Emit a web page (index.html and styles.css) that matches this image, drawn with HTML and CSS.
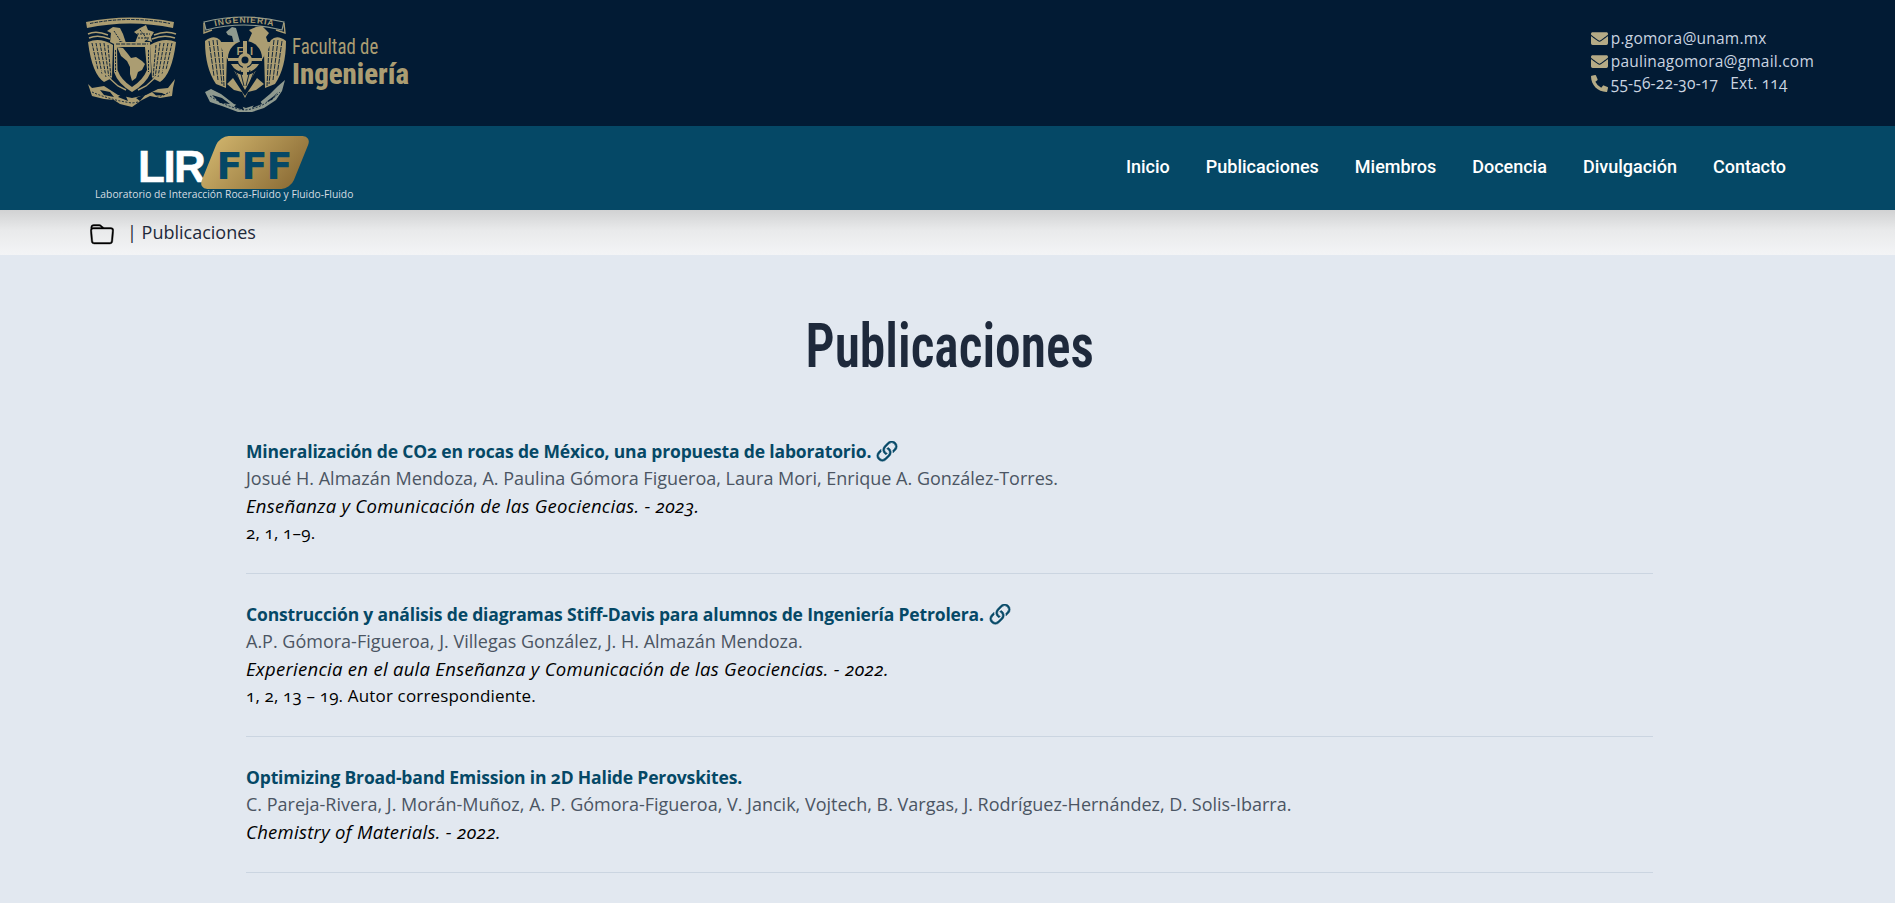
FILE: index.html
```html
<!DOCTYPE html>
<html lang="es">
<head>
<meta charset="utf-8">
<title>Publicaciones</title>
<link rel="stylesheet" href="styles.css">
</head>
<body>
<header class="top">
  <div class="brand">
    <svg class="crest-unam" viewBox="0 0 105 105" aria-hidden="true">
      <path class="g" d="M6 12Q50 3 94 12L93 18Q50 9 7 18Z"/>
      <path class="d-line" d="M10 13.500Q50 5.500 90 13.500" stroke-dasharray="3.500 1.100"/>
      <path class="g-s" d="M8 24Q16 20 28 25M96 24Q86 20 74 25M9 28Q18 24 30 29M95 28Q84 24 72 29"/>
      <path class="g" d="M30 32L31 23L27 21L33 17L40 18L43 24L46 33L40 31L36 35ZM55 33L58 25L54 22L60 18L66 15L68 20L74 22L71 27L72 32L66 30L62 35Z"/>
      <path class="d-line" d="M34 21L40 30M60 20L68 30M57 24L70 24M58 28L70 28" stroke-dasharray="2 1"/>
      <path class="g" d="M8 32Q20 27 33 35L32 68L24 72Q12 64 8 32ZM96 32Q84 27 70 35L72 68L80 72Q92 64 96 32Z"/>
      <path class="d-line" d="M12 33L18 60M16 33L22 64M20 33L26 67M24 33L29 68M28 35L31 68M92 33L86 60M88 33L82 64M84 33L78 67M80 33L75 68M76 35L73 68" stroke-dasharray="3.500 1.100"/>
      <path class="g" d="M34 32H70L71 62Q66 74 52 82Q38 74 34 62Z"/>
      <path class="navy" d="M37 37H65L67 60Q63 70 52 77Q41 70 37.500 60Z"/>
      <path class="d-line" d="M36 34H68" stroke-dasharray="4 1.200"/>
      <path class="d-line" d="M35.500 40V62M68.500 40V62" stroke-dasharray="2.500 1"/>
      <path class="g" d="M37 37L43 38L48 44L51 48L56 47L62 51L65 54L62 60L58 62L56 68L52 71L50 64L50 57L47 51L41 46Z"/>
      <path class="g-s" d="M27 66L38 76L46 80M77 66L66 76L58 80M20 60L30 68M84 60L74 68"/>
      <path class="g" d="M8 74L12 78L24 76L38 85L52 88L66 85L78 79L88 78L95 69L93 78L92 86L80 88L70 86L62 90L52 97L40 94L34 90L24 89L12 86Z"/>
      <path class="navy" d="M20 80L30 82L34 87L24 85ZM38 87L48 91L44 82ZM56 88L66 84L60 91ZM72 82L82 83L86 85L76 85.500Z"/>
      <path class="d-line" d="M12 82Q30 90 52 93Q74 90 90 82" stroke-dasharray="2 1.500"/>
    </svg>
    <svg class="crest-fi" viewBox="0 0 95 108" aria-hidden="true">
      <path class="g-o" d="M6 14Q46 4 86 14L84 22Q46 12 8 22Z"/>
      <path class="g-s" d="M6 15L6 25L14 22M86 15L87 25L78 22"/>
      <path id="fi-arc" class="none" d="M10 20Q46 9.500 83 20"/>
      <text class="crest-text"><textPath href="#fi-arc" startOffset="50%" text-anchor="middle">INGENIERIA</textPath></text>
      <path class="pale" d="M28 24L34 19L38 20L42 34L36 36L34 28L30 27Z"/>
      <path class="g" d="M50 34L54 25L51 22L58 19L64 18L68 22L71 25L68 29L70 35Z"/>
      <path class="g" d="M7 33Q16 26 22 32L29 44L28 80L18 76Q7 60 7 33ZM88 33Q79 26 73 32L66 44L67 80L77 76Q88 60 88 33Z"/>
      <path class="d-line" d="M11 33L16 68M15 32L20 72M19 32L24 76M24 38L26 78M84 33L79 68M80 32L75 72M76 32L71 76M71 38L69 78" stroke-dasharray="5 1"/>
      <path class="g" d="M20 34H74L47 82Z"/>
      <circle class="navy" cx="47" cy="50" r="17"/>
      <path class="g" d="M30 50H64V53H30ZM45 33H49V67H45Z"/>
      <circle class="g" cx="47" cy="52" r="7"/>
      <circle class="navy" cx="47" cy="52" r="3.500"/>
      <path class="g" d="M33 56A16 16 0 0 0 61 56L54 56A8 8 0 0 1 40 56Z"/>
      <text class="fi-letters" x="38.500" y="47">F</text>
      <text class="fi-letters" x="52" y="47">I</text>
      <path class="g" d="M29 76L35 70L47 88L59 70L66 76L58 82L50 84L47 90L44 84L36 82Z"/>
      <path class="d-line" d="M38 64L45 82M56 64L49 82M42 62L46 78M52 62L48 78"/>
      <path class="pale" d="M7 84L13 81L23 86L36 96L48 100L60 96L72 86L80 78L87 72L84 83L78 92L66 100L54 104L40 104L24 98L12 94Z"/>
      <path class="navy" d="M14 87L24 90L32 96L22 95ZM36 99L46 102L42 92ZM54 100L64 96L60 90ZM68 94L76 88L80 84L74 92Z"/>
      <path class="d-line" d="M12 88Q30 100 47 102Q66 100 82 84" stroke-dasharray="2 1.500"/>
    </svg>
    <div class="fi-name">
      <span class="fi-small">Facultad de</span>
      <span class="fi-big">Ingeniería</span>
    </div>
  </div>
  <ul class="contact">
    <li><svg class="ci" viewBox="0 0 512 512"><path d="M502.3 190.8c3.9-3.1 9.7-.2 9.7 4.700V400c0 26.500-21.500 48-48 48H48c-26.500 0-48-21.500-48-48V195.600c0-5 5.700-7.800 9.700-4.700 22.400 17.400 52.100 39.500 154.100 113.600 21.100 15.400 56.700 47.800 92.200 47.600 35.700.3 72-32.800 92.300-47.600 102-74.100 131.600-96.300 154-113.700zM256 320c23.200.4 56.600-29.200 73.400-41.400 132.700-96.300 142.800-104.700 173.400-128.700 5.800-4.500 9.200-11.500 9.200-18.900v-19c0-26.500-21.500-48-48-48H48C21.500 64 0 85.500 0 112v19c0 7.400 3.400 14.300 9.200 18.900 30.600 23.900 40.700 32.400 173.400 128.700 16.800 12.200 50.200 41.800 73.400 41.400z"/></svg>p.gomora@unam.mx</li>
    <li><svg class="ci" viewBox="0 0 512 512"><path d="M502.3 190.8c3.9-3.1 9.700-.2 9.700 4.700V400c0 26.500-21.500 48-48 48H48c-26.500 0-48-21.500-48-48V195.600c0-5 5.700-7.800 9.700-4.700 22.400 17.400 52.100 39.500 154.100 113.600 21.100 15.400 56.700 47.800 92.200 47.600 35.700.3 72-32.800 92.300-47.600 102-74.100 131.600-96.300 154-113.700zM256 320c23.200.4 56.600-29.200 73.400-41.400 132.700-96.300 142.800-104.700 173.400-128.700 5.800-4.500 9.200-11.500 9.200-18.900v-19c0-26.500-21.500-48-48-48H48C21.500 64 0 85.500 0 112v19c0 7.400 3.400 14.300 9.200 18.900 30.600 23.900 40.700 32.400 173.400 128.700 16.800 12.200 50.200 41.800 73.400 41.400z"/></svg>paulinagomora@gmail.com</li>
    <li><svg class="ci" viewBox="0 0 512 512"><path d="M497.390 361.800l-112-48a24 24 0 0 0-28 6.900l-49.600 60.600A370.660 370.660 0 0 1 130.600 204.110l60.600-49.600a23.940 23.940 0 0 0 6.900-28l-48-112A24.160 24.160 0 0 0 122.600.61l-104 24A24 24 0 0 0 0 48c0 256.500 207.900 464 464 464a24 24 0 0 0 23.400-18.600l24-104a24.290 24.290 0 0 0-14.010-27.600z"/></svg>55-56-22-30-17<span class="ext">Ext. 114</span></li>
  </ul>
</header>
<nav class="bar">
  <div class="lab">
    <div class="lab-mark">
      <span class="lab-lir">LIR</span>
      <span class="lab-fff"><span class="lab-fff-t">FFF</span></span>
    </div>
    <div class="lab-sub">Laboratorio de Interacción Roca-Fluido y Fluido-Fluido</div>
  </div>
  <ul class="menu">
    <li>Inicio</li>
    <li>Publicaciones</li>
    <li>Miembros</li>
    <li>Docencia</li>
    <li>Divulgación</li>
    <li>Contacto</li>
  </ul>
</nav>
<div class="crumb">
  <svg class="folder" viewBox="0 0 16 16"><path d="M.54 3.870.5 3a2 2 0 0 1 2-2h3.672a2 2 0 0 1 1.414.586l.828.828A2 2 0 0 0 9.828 3h3.982a2 2 0 0 1 1.992 2.181l-.637 7A2 2 0 0 1 13.174 14H2.826a2 2 0 0 1-1.991-1.819l-.637-7a1.990 1.990 0 0 1 .342-1.310zM2.190 4a1 1 0 0 0-.996 1.090l.637 7a1 1 0 0 0 .995.910h10.348a1 1 0 0 0 .995-.910l.637-7A1 1 0 0 0 13.810 4H2.190zm4.690-1.707A1 1 0 0 0 6.172 2H2.500a1 1 0 0 0-1 .981l.006.139C1.720 3.042 1.950 3 2.190 3h5.396l-.707-.707z"/></svg>
  <span>| Publicaciones</span>
</div>
<main class="page">
  <h1 class="heading"><span class="heading-t">Publicaciones</span></h1>
  <article class="pub">
    <div class="pub-title">Mineralización de CO2 en rocas de México, una propuesta de laboratorio. <svg class="lnk" viewBox="2 2 12 12"><path d="M4.715 6.542 3.343 7.914a3 3 0 1 0 4.243 4.243l1.828-1.829A3 3 0 0 0 8.586 5.500L8 6.086a1.002 1.002 0 0 0-.154.199 2 2 0 0 1 .861 3.337L6.880 11.450a2 2 0 1 1-2.830-2.830l.793-.792a4.018 4.018 0 0 1-.128-1.287z"/><path d="M6.586 4.672A3 3 0 0 0 7.414 9.500l.775-.776a2 2 0 0 1-.896-3.346L9.120 3.550a2 2 0 1 1 2.830 2.830l-.793.792c.112.420.155.855.128 1.287l1.372-1.372a3 3 0 1 0-4.243-4.243L6.586 4.672z"/></svg></div>
    <div class="pub-authors">Josué H. Almazán Mendoza, A. Paulina Gómora Figueroa, Laura Mori, Enrique A. González-Torres.</div>
    <div class="pub-journal">Enseñanza y Comunicación de las Geociencias. - 2023.</div>
    <div class="pub-pages">2, 1, 1–9.</div>
  </article>
  <article class="pub">
    <div class="pub-title">Construcción y análisis de diagramas Stiff-Davis para alumnos de Ingeniería Petrolera. <svg class="lnk" viewBox="2 2 12 12"><path d="M4.715 6.542 3.343 7.914a3 3 0 1 0 4.243 4.243l1.828-1.829A3 3 0 0 0 8.586 5.500L8 6.086a1.002 1.002 0 0 0-.154.199 2 2 0 0 1 .861 3.337L6.880 11.450a2 2 0 1 1-2.830-2.830l.793-.792a4.018 4.018 0 0 1-.128-1.287z"/><path d="M6.586 4.672A3 3 0 0 0 7.414 9.500l.775-.776a2 2 0 0 1-.896-3.346L9.120 3.550a2 2 0 1 1 2.830 2.830l-.793.792c.112.420.155.855.128 1.287l1.372-1.372a3 3 0 1 0-4.243-4.243L6.586 4.672z"/></svg></div>
    <div class="pub-authors">A.P. Gómora-Figueroa, J. Villegas González, J. H. Almazán Mendoza.</div>
    <div class="pub-journal">Experiencia en el aula Enseñanza y Comunicación de las Geociencias. - 2022.</div>
    <div class="pub-pages">1, 2, 13 – 19. Autor correspondiente.</div>
  </article>
  <article class="pub">
    <div class="pub-title">Optimizing Broad-band Emission in 2D Halide Perovskites.</div>
    <div class="pub-authors">C. Pareja-Rivera, J. Morán-Muñoz, A. P. Gómora-Figueroa, V. Jancik, Vojtech, B. Vargas, J. Rodríguez-Hernández, D. Solis-Ibarra.</div>
    <div class="pub-journal">Chemistry of Materials. - 2022.</div>
  </article>
</main>
</body>
</html>
```
FILE: styles.css
```css
* { box-sizing: border-box; }
html, body { margin: 0; padding: 0; }
body {
  height: 903px;
  overflow: hidden;
  background: #e2e8f0;
  font-family: "Open Sans", "Liberation Sans", sans-serif;
  font-size: 18px;
  line-height: 27px;
  font-variant-numeric: oldstyle-nums;
}
ul { list-style: none; margin: 0; padding: 0; }

.top {
  height: 126px;
  background: #021b34;
  display: flex;
  justify-content: space-between;
  align-items: center;
  padding: 0 81px 0 80px;
}
.brand { display: flex; align-items: flex-start; height: 126px; }
.crest-unam { width: 105px; height: 105px; margin: 10px 13px 0 0; }
.crest-fi { width: 95px; height: 108px; margin: 8px 0 0 0; }
.g { fill: #ab9d72; }
.pale { fill: #8f9a8f; }
.g-o { fill: none; stroke: #8f9a8f; stroke-width: 1.200; }
.g-s { fill: none; stroke: #ab9d72; stroke-width: 1.400; }
.navy { fill: #021b34; }
.none { fill: none; }
.d-line { fill: none; stroke: #021b34; stroke-width: .900; }
.crest-text { font: 700 8.500px "Liberation Sans", sans-serif; fill: #ab9d72; letter-spacing: 1px; }
.fi-letters { font: 700 11px "Liberation Sans", sans-serif; fill: #ab9d72; }
.fi-name { display: flex; flex-direction: column; align-items: flex-start; color: #ab9d72; font-family: "Roboto", sans-serif; font-stretch: 75%; padding-top: 33px; margin-left: -1px; }
.fi-small { font-size: 22.500px; line-height: 26px; transform: scaleX(.836); transform-origin: left center; }
.fi-big { font-size: 30px; line-height: 30px; font-weight: 800; transform: scaleX(.96); transform-origin: left center; }

.contact { color: #cbd5e1; font-size: 15.500px; line-height: 22.500px; letter-spacing: .22px; padding-bottom: 4px; }
.contact li { display: flex; align-items: center; }
.ci { width: 17px; height: 17px; margin-right: 3px; fill: #b5ab86; }
.ext { margin-left: 12px; }

.bar {
  height: 84px;
  background: #054866;
  display: flex;
  justify-content: space-between;
  align-items: center;
  padding: 0 109px 0 95px;
}
.lab { width: 258px; height: 66px; margin-top: 1px; }
.lab-mark { display: flex; align-items: flex-start; padding-left: 43px; height: 52px; }
.lab-lir { color: #fff; font: 700 44px/43px "Liberation Sans", sans-serif; margin-top: 9px; letter-spacing: -1.500px; -webkit-text-stroke: .5px #fff; width: 64px; }
.lab-fff {
  width: 92px;
  height: 53px;
  margin-left: 7px;
  background: linear-gradient(115deg, #cdb16a, #8d6e37);
  transform: skewX(-22deg);
  border-radius: 9px;
  display: flex;
  align-items: center;
  justify-content: center;
  padding-top: 7px;
}
.lab-fff-t { color: #054866; font: 700 38px/38px "DejaVu Sans", sans-serif; transform: skewX(22deg); letter-spacing: -1px; }
.lab-sub { color: #d5dde2; font: 10.300px/12px "Open Sans", sans-serif; white-space: nowrap; }

.menu { display: flex; gap: 36px; color: #fff; font-family: "Roboto", sans-serif; font-size: 18px; font-weight: 500; font-stretch: 88.500%; margin-bottom: 4px; }

.crumb {
  height: 45px;
  background: linear-gradient(#d1d2d3, #e9eaeb 45%, #f3f4f6);
  display: flex;
  align-items: center;
  padding: 0 0 0 90px;
  color: #1e293b;
  font-size: 18px;
}
.folder { width: 24px; height: 24px; margin: 5px 13px 0 0; fill: #000; stroke: #000; stroke-width: .25; }

.page { padding: 0 242px 0 246px; }
.heading {
  margin: 0;
  height: 183px;
  padding-top: 58px;
  text-align: center;
  color: #1e293b;
  font: 600 62px/66px "Roboto", sans-serif;
  font-stretch: 75%;
}
.heading-t { display: inline-block; transform: scaleX(.83); }
.pub { padding-bottom: 27px; margin-bottom: 27px; border-bottom: 1px solid #cbd5e1; }
.pub-title { color: #054866; font-weight: 700; font-size: 17.500px; letter-spacing: -.16px; display: flex; align-items: center; gap: 5px; }
.pub-authors { color: #4b5563; font-size: 18px; letter-spacing: 0; }
.pub-journal { color: #000; font-style: italic; font-size: 18.500px; letter-spacing: .28px; }
.pub-pages { color: #000; font-size: 17px; letter-spacing: .16px; }
.lnk { width: 22px; height: 22px; fill: #054866; stroke: #054866; stroke-width: .3; }
```
